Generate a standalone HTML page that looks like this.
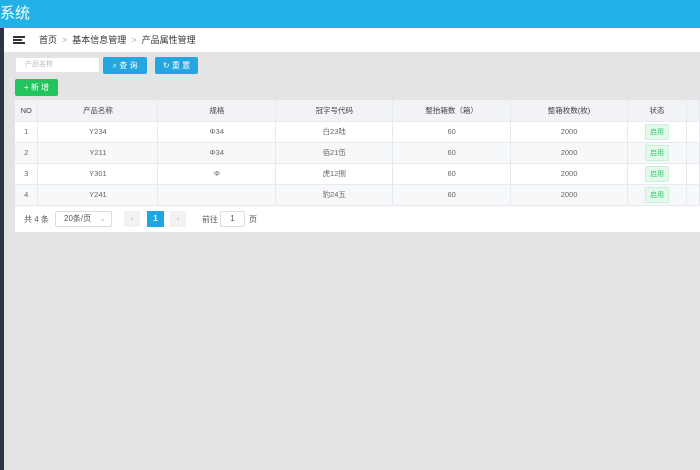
<html><head><style>
*{margin:0;padding:0;box-sizing:border-box}
body{width:700px;height:470px;overflow:hidden;background:#e4e4e4;font-family:"Liberation Sans","Noto Sans CJK SC",sans-serif;position:relative}
.top{position:absolute;left:0;top:0;width:700px;height:28px;background:#22b1e6;color:#fff;font-size:15px;line-height:28px;padding-left:0}
.side{position:absolute;left:0;top:28px;width:4px;height:442px;background:#2b3447}
.bc{position:absolute;left:4px;top:28px;width:696px;height:24px;background:#fff;font-size:9px;color:#333;line-height:24px}
.abs{position:absolute}
.btn{position:absolute;height:17px;color:#fff;font-size:8px;line-height:17px;text-align:center;border-radius:2px}
table{position:absolute;left:15px;top:100px;border-collapse:collapse;font-size:7.5px;color:#666}
td{height:21px;text-align:center;border-right:1px solid #e6e9ee;border-bottom:1px solid #e6e9ee;background:#fff}
tr.h td{background:#f1f3f6;color:#444}
tr.a td{background:#f7f8fa}
.tag{display:inline-block;background:#e4f8ec;color:#2ec86a;padding:2px 4px;border:1px solid #c9f0d8;border-radius:2px;font-size:7px}
.pg{position:absolute;left:15px;top:206px;width:685px;height:26px;background:#fff;font-size:8px;color:#555}
</style></head><body>
<div class="top">系统</div>
<div class="side"></div>
<div class="bc">
<div class="abs" style="left:9px;top:8px;width:12px;height:2px;background:#333"></div>
<div class="abs" style="left:9px;top:11px;width:9px;height:2px;background:#333"></div>
<div class="abs" style="left:9px;top:14px;width:12px;height:2px;background:#333"></div>
<span class="abs" style="left:35px">首页 <span style="color:#aaa">&nbsp;&gt;&nbsp;</span> 基本信息管理 <span style="color:#aaa">&nbsp;&gt;&nbsp;</span> 产品属性管理</span>
</div>
<div class="abs" style="left:15px;top:57px;width:85px;height:16px;background:#fff;border:1px solid #e4e4e4;font-size:7px;color:#bbb;line-height:14px;padding-left:9px">产品名称</div>
<div class="btn" style="left:103px;top:57px;width:44px;background:#24a7e0">⌕ 查 询</div>
<div class="btn" style="left:155px;top:57px;width:43px;background:#24a7e0">↻ 重 置</div>
<div class="btn" style="left:15px;top:79px;width:43px;background:#22c45e">+ 新 增</div>
<table>
<tr class="h"><td style="width:23px">NO</td><td style="width:120px">产品名称</td><td style="width:118px">规格</td><td style="width:117px">冠字号代码</td><td style="width:118px">整抬箱数（箱）</td><td style="width:117px">整箱枚数(枚)</td><td style="width:59px">状态</td><td style="width:13px"></td></tr>
<tr><td>1</td><td>Y234</td><td>Φ34</td><td>白23陆</td><td>60</td><td>2000</td><td><span class="tag">启用</span></td><td></td></tr>
<tr class="a"><td>2</td><td>Y211</td><td>Φ34</td><td>佰21伍</td><td>60</td><td>2000</td><td><span class="tag">启用</span></td><td></td></tr>
<tr><td>3</td><td>Y301</td><td>Φ</td><td>虎12捌</td><td>60</td><td>2000</td><td><span class="tag">启用</span></td><td></td></tr>
<tr class="a"><td>4</td><td>Y241</td><td></td><td>豹24五</td><td>60</td><td>2000</td><td><span class="tag">启用</span></td><td></td></tr>
</table>
<div class="pg">
<span class="abs" style="left:9px;top:8px">共 4 条</span>
<div class="abs" style="left:40px;top:5px;width:57px;height:16px;border:1px solid #ddd;border-radius:2px;padding-left:8px;line-height:14px">20条/页 <span style="color:#bbb;margin-left:6px">⌄</span></div>
<div class="abs" style="left:109px;top:5px;width:16px;height:16px;background:#f2f2f2;color:#bbb;text-align:center;line-height:16px">‹</div>
<div class="abs" style="left:132px;top:5px;width:17px;height:16px;background:#1ea6e0;color:#fff;text-align:center;line-height:16px;font-weight:bold">1</div>
<div class="abs" style="left:155px;top:5px;width:16px;height:16px;background:#f2f2f2;color:#bbb;text-align:center;line-height:16px">›</div>
<span class="abs" style="left:187px;top:8px">前往</span>
<div class="abs" style="left:205px;top:5px;width:25px;height:16px;border:1px solid #ddd;border-radius:2px;text-align:center;line-height:14px">1</div>
<span class="abs" style="left:234px;top:8px">页</span>
</div>
</body></html>
